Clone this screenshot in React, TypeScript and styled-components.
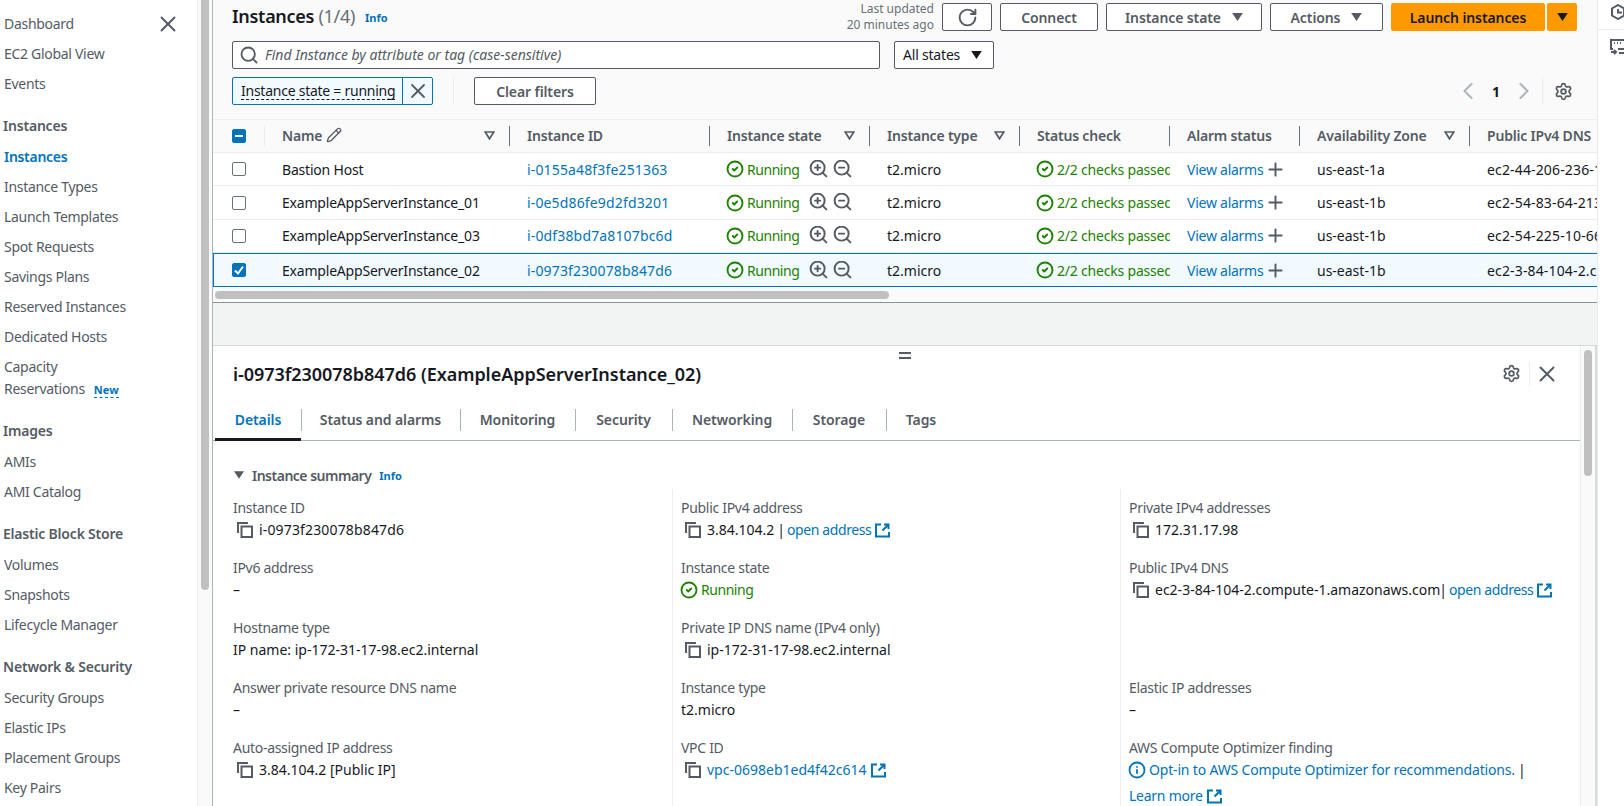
import React from "react";
import styled, { createGlobalStyle } from "styled-components";
import {
  ChevronLeft,
  ChevronRight,
  CircleCheck,
  Info as InfoIcon,
  Pencil,
  Plus,
  RotateCw,
  Search,
  Settings,
  X,
  ZoomIn,
  ZoomOut,
} from "lucide-react";

const GlobalStyle = createGlobalStyle`
  html, body {
    margin: 0;
    padding: 0;
    height: 100%;
    overflow: hidden;
    background: #fff;
  }
  * {
    box-sizing: border-box;
  }
  body {
    font-family: "Noto Sans", "Open Sans", sans-serif;
    font-size: 14px;
    color: #16191f;
  }
`;

const Page = styled.div`
  display: grid;
  grid-template-columns: 197px 16px 1384px 27px;
  width: 1624px;
  height: 806px;
  overflow: hidden;
`;

/* ---------- side nav ---------- */

const Sidebar = styled.nav`
  padding-top: 13px;
  background: #fff;
  overflow: hidden;
`;

const NavHeading = styled.div`
  margin: 19.7px 0 9px 3px;
  font-size: 14px;
  line-height: 22px;
  font-weight: 600;
  letter-spacing: -0.2px;
  color: #545b64;
`;

const NavItem = styled.a<{ $active?: boolean; $tight?: boolean }>`
  display: block;
  margin: 0 0 ${(p) => (p.$tight ? 6 : 8)}px 4px;
  line-height: 22px;
  letter-spacing: -0.3px;
  color: ${(p) => (p.$active ? "#0073bb" : "#545b64")};
  font-weight: ${(p) => (p.$active ? 600 : 400)};
`;

const NavTop = styled.div`
  display: flex;
  justify-content: space-between;
  align-items: center;
  height: 22px;
  padding-right: 16px;
  color: #545b64;
`;

const NewTag = styled.span`
  margin-left: 9px;
  font-size: 11px;
  font-weight: 700;
  letter-spacing: 0;
  color: #0073bb;
  border-bottom: 1px dashed #0073bb;
`;

const SideTrack = styled.div`
  border-left: 1px solid #eaeded;
  border-right: 1px solid #aab7b8;
  background: #fafafa;
  padding: 0 3px;
`;

const SideThumb = styled.div`
  width: 8px;
  height: 590px;
  border-radius: 0 0 4px 4px;
  background: #c0c0c0;
`;

/* ---------- main column ---------- */

const Main = styled.main`
  display: flex;
  flex-direction: column;
  min-width: 0;
  height: 806px;
`;

const TopPanel = styled.section`
  height: 303px;
  background: #fafafa;
  border-bottom: 1px solid #879596;
  overflow: hidden;
`;

const Toolbar = styled.div`
  display: flex;
  align-items: center;
  height: 34px;
  padding: 0 20px 0 19px;
`;

const Title = styled.h1`
  margin: -2px 0 0;
  font-size: 18px;
  line-height: 34px;
  font-weight: 600;
  letter-spacing: -0.3px;
  color: #16191f;
`;

const Count = styled.span`
  font-weight: 400;
  color: #687078;
`;

const InfoLink = styled.a`
  margin-left: 10px;
  font-size: 11px;
  font-weight: 700;
  color: #0073bb;
`;

const Updated = styled.div`
  margin-left: auto;
  margin-right: 8px;
  text-align: right;
  font-size: 12px;
  line-height: 16px;
  color: #687078;
`;

const Button = styled.button<{ $w: number; $gap?: number }>`
  display: flex;
  align-items: center;
  justify-content: center;
  gap: 11px;
  width: ${(p) => p.$w}px;
  height: 28px;
  margin-left: ${(p) => p.$gap ?? 8}px;
  padding: 0;
  border: 1px solid #545b64;
  border-radius: 2px;
  background: #fff;
  font-family: inherit;
  font-size: 14px;
  font-weight: 600;
  letter-spacing: -0.1px;
  color: #545b64;
`;

const PrimaryButton = styled(Button)`
  border: none;
  background: #ff9900;
  color: #16191f;
`;

const Caret = styled.svg`
  width: 11px;
  height: 8px;
  fill: currentColor;
`;

const FilterRow = styled.div`
  display: flex;
  align-items: center;
  gap: 14px;
  height: 28px;
  margin-top: 7px;
  padding-left: 19px;
`;

const SearchBox = styled.div`
  display: flex;
  align-items: center;
  gap: 6px;
  width: 648px;
  height: 28px;
  padding: 0 0 1px 6px;
  border: 1px solid #545b64;
  border-radius: 2px;
  background: #fff;
  color: #545b64;
  font-size: 14px;
  font-style: italic;
`;

const StateSelect = styled.div`
  display: flex;
  align-items: center;
  gap: 11px;
  width: 100px;
  height: 28px;
  padding: 0 0 1px 8px;
  border: 1px solid #545b64;
  border-radius: 2px;
  background: #fff;
  color: #16191f;
  letter-spacing: -0.2px;
`;

const ChipRow = styled.div`
  display: flex;
  align-items: center;
  height: 28px;
  margin: 8px 0 14px;
  padding: 0 24px 0 19px;
`;

const Chip = styled.div`
  display: flex;
  align-items: center;
  width: 201px;
  height: 28px;
  border: 1px solid #0073bb;
  border-radius: 2px;
  background: #f1faff;
`;

const ChipLabel = styled.span`
  display: flex;
  align-items: center;
  width: 170px;
  height: 26px;
  padding-left: 8px;
  border-right: 1px solid #0073bb;
`;

const ChipText = styled.span`
  line-height: 17px;
  letter-spacing: -0.25px;
  border-bottom: 1px dashed #16191f;
`;

const ChipClose = styled.span`
  display: flex;
  justify-content: center;
  flex: 1;
  color: #545b64;
`;

const VRule = styled.span<{ $h?: number; $color?: string }>`
  display: block;
  width: 1px;
  height: ${(p) => p.$h ?? 28}px;
  background: ${(p) => p.$color ?? "#eaeded"};
`;

const ChipDivider = styled(VRule)`
  margin: 0 20px;
`;

const Pager = styled.div`
  display: flex;
  align-items: center;
  margin-left: auto;
  color: #aab7b8;
`;

const PageNumber = styled.span`
  width: 28px;
  text-align: center;
  font-weight: 700;
  color: #16191f;
`;

const PagerDivider = styled(VRule)`
  margin: 0 11px 0 4px;
`;

const Gear = styled(Settings)`
  color: #545b64;
`;

const Table = styled.div`
  border-top: 1px solid #eaeded;
`;

const COLUMNS = "52px 245px 200px 160px 150px 150px 130px 170px 127px";

const HeadRow = styled.div`
  display: grid;
  grid-template-columns: ${COLUMNS};
  height: 33px;
  align-items: center;
  background: #fafafa;
  border-bottom: 1px solid #eaeded;
`;

const Row = styled.div<{ $selected?: boolean }>`
  display: grid;
  grid-template-columns: ${COLUMNS};
  height: ${(p) => (p.$selected ? 34 : 33.4)}px;
  align-items: center;
  background: ${(p) => (p.$selected ? "#f1faff" : "#fff")};
  border-bottom: 1px solid ${(p) => (p.$selected ? "#0073bb" : "#eaeded")};
  border-top: ${(p) => (p.$selected ? "1px solid #0073bb" : "none")};
  box-shadow: ${(p) => (p.$selected ? "inset 1px 0 0 #0073bb" : "none")};
`;

const HeadCheckCell = styled.div`
  display: flex;
  align-items: center;
  padding-left: 19px;
  height: 20px;
  border-right: 1px solid #eaeded;
`;

const CheckCell = styled.div`
  display: flex;
  padding-left: 19px;
`;

const Box = styled.span<{ $on?: boolean }>`
  display: flex;
  align-items: center;
  justify-content: center;
  width: 14px;
  height: 14px;
  border-radius: 2px;
  border: 1px solid ${(p) => (p.$on ? "#0073bb" : "#687078")};
  background: ${(p) => (p.$on ? "#0073bb" : "#fff")};
`;

const HeadCell = styled.div<{ $divider?: boolean }>`
  display: flex;
  align-items: center;
  justify-content: space-between;
  height: 20px;
  padding: 0 14px 2px 17px;
  border-right: ${(p) => (p.$divider ? "1px solid #687078" : "none")};
  font-weight: 600;
  letter-spacing: -0.2px;
  color: #545b64;
  white-space: nowrap;
`;

const NameLabel = styled.span`
  display: inline-flex;
  align-items: center;
  gap: 4px;
`;

const Cell = styled.div<{ $spacing?: number }>`
  display: flex;
  align-items: center;
  padding-left: 17px;
  overflow: hidden;
  white-space: nowrap;
  letter-spacing: ${(p) => p.$spacing ?? 0}px;
`;

const Link = styled.a<{ $spacing?: number }>`
  color: #0073bb;
  letter-spacing: ${(p) => p.$spacing ?? -0.25}px;
`;

const Status = styled.span<{ $spacing?: number }>`
  display: inline-flex;
  align-items: center;
  gap: 3px;
  color: #1d8102;
  letter-spacing: ${(p) => p.$spacing ?? -0.45}px;

  svg {
    margin-left: -1px;
  }
`;

const ZoomIcons = styled.span`
  display: inline-flex;
  gap: 3px;
  margin: -2px 0 0 9px;
  color: #545b64;
`;

const AddIcon = styled(Plus)`
  margin-left: 2px;
  color: #545b64;
`;

const HScroll = styled.div`
  width: 674px;
  height: 8px;
  margin: 4px 0 0 2px;
  border-radius: 4px;
  background: #c0c0c0;
`;

const Splitter = styled.div`
  height: 43px;
  background: #f2f3f3;
  border-bottom: 1px solid #d5dbdb;
`;

/* ---------- details panel ---------- */

const DetailWrap = styled.section`
  display: grid;
  grid-template-columns: 1367px 15px 2px;
  grid-template-rows: minmax(0, 1fr);
  flex: 1;
  min-height: 0;
`;

const Detail = styled.div`
  position: relative;
  background: #fff;
  overflow: hidden;
`;

const Handle = styled.span`
  position: absolute;
  left: 686px;
  top: 6px;
  width: 12px;
  height: 7px;
  border-top: 2px solid #545b64;
  border-bottom: 2px solid #545b64;
`;

const DetailHead = styled.div`
  display: flex;
  align-items: center;
  justify-content: space-between;
  height: 55px;
  padding: 0 20px 0 20px;
`;

const DetailTitle = styled.h2`
  margin: 0;
  font-size: 18px;
  font-weight: 600;
  letter-spacing: -0.05px;
  color: #16191f;
`;

const DetailTools = styled.div`
  display: flex;
  align-items: center;
  color: #545b64;
`;

const ToolDivider = styled(VRule)`
  margin: 0 4px 0 8px;
`;

const Tabs = styled.div`
  display: flex;
  align-items: stretch;
  height: 40px;
  padding-left: 2px;
  border-bottom: 1px solid #aab7b8;
`;

const Tab = styled.div<{ $active?: boolean; $w: number }>`
  position: relative;
  display: flex;
  align-items: center;
  justify-content: center;
  width: ${(p) => p.$w}px;
  margin-bottom: -1px;
  font-weight: 600;
  letter-spacing: -0.1px;
  color: ${(p) => (p.$active ? "#0073bb" : "#545b64")};
  border-bottom: 3px solid ${(p) => (p.$active ? "#16191f" : "transparent")};

  &:not(:last-child)::after {
    content: "";
    position: absolute;
    right: -1px;
    top: 8px;
    height: 22px;
    width: 1px;
    background: #aab7b8;
  }
`;

const SummaryTitle = styled.div`
  display: flex;
  align-items: center;
  height: 22px;
  margin: 23px 0 0 21px;
  font-weight: 600;
  letter-spacing: -0.5px;
  color: #545b64;
`;

const SummaryCaret = styled(Caret)`
  width: 10px;
  height: 8px;
  margin-right: 8px;
`;

const SummaryInfo = styled(InfoLink)`
  margin-left: 8px;
  letter-spacing: 0;
`;

const Fields = styled.div`
  display: grid;
  grid-template-columns: repeat(3, 448px);
  margin: 3px 0 0 11px;
`;

const FieldColumn = styled.div`
  padding: 0 0 40px 8px;
  border-left: 1px solid #eaeded;

  &:first-child {
    padding-left: 9px;
    border-left: none;
  }
`;

const Field = styled.div`
  height: 60px;
  padding-top: 8px;
`;

const FieldGap = styled.div`
  height: 60px;
`;

const Label = styled.div`
  line-height: 22px;
  letter-spacing: -0.3px;
  color: #545b64;
`;

const Value = styled.div<{ $top?: number; $spacing?: number }>`
  display: flex;
  align-items: center;
  margin-top: ${(p) => p.$top ?? 0}px;
  line-height: 22px;
  letter-spacing: ${(p) => p.$spacing ?? 0}px;
  color: #16191f;
  white-space: nowrap;
`;

const CopyIcon = styled.svg`
  flex: none;
  width: 16px;
  height: 16px;
  margin: 0 6px 0 4px;
  color: #545b64;
`;

const ExternalIcon = styled.svg`
  flex: none;
  width: 15px;
  height: 15px;
  margin-left: 4px;
  color: #0073bb;
`;

const Sep = styled.span<{ $tight?: boolean }>`
  margin: ${(p) => (p.$tight ? "0 2px 0 -1px" : "0 2px 0 3px")};
`;

const OptimizerIcon = styled(InfoIcon)`
  margin: 0 3px 0 -1px;
  color: #0073bb;
`;

const DetailTrack = styled.div`
  border-left: 1px solid #eaeded;
  background: #fafafa;
  padding: 4px 0 0 3px;
`;

const DetailThumb = styled.div`
  width: 8px;
  height: 126px;
  border-radius: 4px;
  background: #c0c0c0;
`;

const DetailEdge = styled.div`
  background: #d5dbdb;
`;

/* ---------- right rail ---------- */

const Rail = styled.aside`
  border-left: 1px solid #eaeded;
  background: #fff;
  overflow: hidden;
`;

const RailSlot = styled.div<{ $line?: boolean }>`
  display: flex;
  align-items: flex-start;
  height: 30px;
  padding: ${(p) => (p.$line ? "4px" : "9px")} 0 0 12px;
  border-bottom: ${(p) => (p.$line ? "1px solid #eaeded" : "none")};
  color: #545b64;
`;

const RailIcon = styled.svg`
  flex: none;
  width: 16px;
  height: 16px;
`;

const CaretDown = () => (
  <Caret viewBox="0 0 12 9">
    <path d="M0 0h12L6 9z" />
  </Caret>
);

const SortCaret = () => (
  <svg width="11" height="9" viewBox="0 0 11 9" fill="none" stroke="#545b64" strokeWidth="1.7">
    <path d="M1.2 1h8.6L5.5 7.8z" />
  </svg>
);

const Copy = () => (
  <CopyIcon viewBox="0 0 16 16" fill="none" stroke="currentColor" strokeWidth="2">
    <path d="M1 11V1h10" />
    <rect x="4.5" y="4.5" width="10.5" height="10.5" />
  </CopyIcon>
);

const External = () => (
  <ExternalIcon viewBox="0 0 15 15" fill="none" stroke="currentColor" strokeWidth="2">
    <path d="M6 1.5H1v12h13V9" />
    <path d="M9 1.5h4.5V6M13.5 1.5 7.5 7.5" />
  </ExternalIcon>
);

const Running = () => (
  <Status>
    <CircleCheck size={18} strokeWidth={2.5} />
    Running
  </Status>
);

const rows = [
  { name: "Bastion Host", id: "i-0155a48f3fe251363", zone: "us-east-1a", dns: "ec2-44-206-236-146.compute-1" },
  { name: "ExampleAppServerInstance_01", id: "i-0e5d86fe9d2fd3201", zone: "us-east-1b", dns: "ec2-54-83-64-213.compute-1" },
  { name: "ExampleAppServerInstance_03", id: "i-0df38bd7a8107bc6d", zone: "us-east-1b", dns: "ec2-54-225-10-66.compute-1" },
  { name: "ExampleAppServerInstance_02", id: "i-0973f230078b847d6", zone: "us-east-1b", dns: "ec2-3-84-104-2.compute-1", selected: true },
];

const tabs = [
  { label: "Details", w: 86 },
  { label: "Status and alarms", w: 159 },
  { label: "Monitoring", w: 115 },
  { label: "Security", w: 97 },
  { label: "Networking", w: 120 },
  { label: "Storage", w: 94 },
  { label: "Tags", w: 70 },
];

const instanceItems = [
  "Instances",
  "Instance Types",
  "Launch Templates",
  "Spot Requests",
  "Savings Plans",
  "Reserved Instances",
  "Dedicated Hosts",
];

export default function App() {
  return (
    <Page>
      <GlobalStyle />
      <Sidebar>
        <NavItem as="div">
          <NavTop>
            Dashboard
            <X size={26} strokeWidth={1.8} />
          </NavTop>
        </NavItem>
        <NavItem>EC2 Global View</NavItem>
        <NavItem>Events</NavItem>
        <NavHeading>Instances</NavHeading>
        {instanceItems.map((item, i) => (
          <NavItem key={item} $active={i === 0}>
            {item}
          </NavItem>
        ))}
        <NavItem $tight>
          Capacity
          <br />
          Reservations
          <NewTag>New</NewTag>
        </NavItem>
        <NavHeading>Images</NavHeading>
        <NavItem>AMIs</NavItem>
        <NavItem>AMI Catalog</NavItem>
        <NavHeading>Elastic Block Store</NavHeading>
        <NavItem>Volumes</NavItem>
        <NavItem>Snapshots</NavItem>
        <NavItem>Lifecycle Manager</NavItem>
        <NavHeading>Network &amp; Security</NavHeading>
        <NavItem>Security Groups</NavItem>
        <NavItem>Elastic IPs</NavItem>
        <NavItem>Placement Groups</NavItem>
        <NavItem>Key Pairs</NavItem>
      </Sidebar>
      <SideTrack>
        <SideThumb />
      </SideTrack>

      <Main>
        <TopPanel>
          <Toolbar>
            <Title>
              Instances <Count>(1/4)</Count>
            </Title>
            <InfoLink>Info</InfoLink>
            <Updated>
              Last updated
              <br />
              20 minutes ago
            </Updated>
            <Button $w={50} $gap={0}>
              <RotateCw size={21} strokeWidth={2.2} />
            </Button>
            <Button $w={98}>Connect</Button>
            <Button $w={156}>
              Instance state <CaretDown />
            </Button>
            <Button $w={113}>
              Actions <CaretDown />
            </Button>
            <PrimaryButton $w={154}>Launch instances</PrimaryButton>
            <PrimaryButton $w={30} $gap={2}>
              <CaretDown />
            </PrimaryButton>
          </Toolbar>
          <FilterRow>
            <SearchBox>
              <Search size={20} strokeWidth={2.2} />
              Find Instance by attribute or tag (case-sensitive)
            </SearchBox>
            <StateSelect>
              All states <CaretDown />
            </StateSelect>
          </FilterRow>
          <ChipRow>
            <Chip>
              <ChipLabel>
                <ChipText>Instance state = running</ChipText>
              </ChipLabel>
              <ChipClose>
                <X size={24} strokeWidth={1.8} />
              </ChipClose>
            </Chip>
            <ChipDivider />
            <Button $w={122} $gap={0}>
              Clear filters
            </Button>
            <Pager>
              <ChevronLeft size={28} strokeWidth={1.8} />
              <PageNumber>1</PageNumber>
              <ChevronRight size={28} strokeWidth={1.8} />
              <PagerDivider />
              <Gear size={19} strokeWidth={2.2} />
            </Pager>
          </ChipRow>
          <Table>
            <HeadRow>
              <HeadCheckCell>
                <Box $on>
                  <svg width="10" height="10" viewBox="0 0 10 10" stroke="#fff" strokeWidth="2">
                    <path d="M1 5h8" />
                  </svg>
                </Box>
              </HeadCheckCell>
              <HeadCell $divider>
                <NameLabel>
                  Name <Pencil size={16} strokeWidth={2} />
                </NameLabel>
                <SortCaret />
              </HeadCell>
              <HeadCell $divider>Instance ID</HeadCell>
              <HeadCell $divider>
                Instance state <SortCaret />
              </HeadCell>
              <HeadCell $divider>
                Instance type <SortCaret />
              </HeadCell>
              <HeadCell $divider>Status check</HeadCell>
              <HeadCell $divider>Alarm status</HeadCell>
              <HeadCell $divider>
                Availability Zone <SortCaret />
              </HeadCell>
              <HeadCell>Public IPv4 DNS</HeadCell>
            </HeadRow>
            {rows.map((r) => (
              <Row key={r.id} $selected={r.selected}>
                <CheckCell>
                  <Box $on={r.selected}>
                    {r.selected && (
                      <svg width="12" height="12" viewBox="0 0 12 12" fill="none" stroke="#fff" strokeWidth="2">
                        <path d="M2 6.5 5 9.5 10 2.5" />
                      </svg>
                    )}
                  </Box>
                </CheckCell>
                <Cell $spacing={-0.2}>{r.name}</Cell>
                <Cell>
                  <Link $spacing={0.15}>{r.id}</Link>
                </Cell>
                <Cell>
                  <Running />
                  <ZoomIcons>
                    <ZoomIn size={21} strokeWidth={2.2} />
                    <ZoomOut size={21} strokeWidth={2.2} />
                  </ZoomIcons>
                </Cell>
                <Cell>t2.micro</Cell>
                <Cell>
                  <Status $spacing={-0.2}>
                    <CircleCheck size={18} strokeWidth={2.5} />
                    2/2 checks passed
                  </Status>
                </Cell>
                <Cell>
                  <Link>View alarms</Link>
                  <AddIcon size={21} strokeWidth={2.2} />
                </Cell>
                <Cell>{r.zone}</Cell>
                <Cell $spacing={0.15}>{r.dns}</Cell>
              </Row>
            ))}
          </Table>
          <HScroll />
        </TopPanel>

        <Splitter />

        <DetailWrap>
          <Detail>
            <Handle />
            <DetailHead>
              <DetailTitle>i-0973f230078b847d6 (ExampleAppServerInstance_02)</DetailTitle>
              <DetailTools>
                <Settings size={19} strokeWidth={2.2} />
                <ToolDivider $h={24} />
                <X size={26} strokeWidth={1.8} />
              </DetailTools>
            </DetailHead>
            <Tabs>
              {tabs.map((t, i) => (
                <Tab key={t.label} $w={t.w} $active={i === 0}>
                  {t.label}
                </Tab>
              ))}
            </Tabs>
            <SummaryTitle>
              <SummaryCaret viewBox="0 0 12 9">
                <path d="M0 0h12L6 9z" />
              </SummaryCaret>
              Instance summary
              <SummaryInfo>Info</SummaryInfo>
            </SummaryTitle>
            <Fields>
              <FieldColumn>
                <Field>
                  <Label>Instance ID</Label>
                  <Value $spacing={0.15}>
                    <Copy />
                    i-0973f230078b847d6
                  </Value>
                </Field>
                <Field>
                  <Label>IPv6 address</Label>
                  <Value>–</Value>
                </Field>
                <Field>
                  <Label>Hostname type</Label>
                  <Value>IP name: ip-172-31-17-98.ec2.internal</Value>
                </Field>
                <Field>
                  <Label>Answer private resource DNS name</Label>
                  <Value>–</Value>
                </Field>
                <Field>
                  <Label>Auto-assigned IP address</Label>
                  <Value>
                    <Copy />
                    3.84.104.2 [Public IP]
                  </Value>
                </Field>
              </FieldColumn>
              <FieldColumn>
                <Field>
                  <Label>Public IPv4 address</Label>
                  <Value>
                    <Copy />
                    3.84.104.2
                    <Sep>|</Sep>
                    <Link $spacing={-0.4}>open address</Link>
                    <External />
                  </Value>
                </Field>
                <Field>
                  <Label>Instance state</Label>
                  <Value>
                    <Running />
                  </Value>
                </Field>
                <Field>
                  <Label>Private IP DNS name (IPv4 only)</Label>
                  <Value>
                    <Copy />
                    ip-172-31-17-98.ec2.internal
                  </Value>
                </Field>
                <Field>
                  <Label>Instance type</Label>
                  <Value>t2.micro</Value>
                </Field>
                <Field>
                  <Label>VPC ID</Label>
                  <Value>
                    <Copy />
                    <Link $spacing={0}>vpc-0698eb1ed4f42c614</Link>
                    <External />
                  </Value>
                </Field>
              </FieldColumn>
              <FieldColumn>
                <Field>
                  <Label>Private IPv4 addresses</Label>
                  <Value>
                    <Copy />
                    172.31.17.98
                  </Value>
                </Field>
                <Field>
                  <Label>Public IPv4 DNS</Label>
                  <Value>
                    <Copy />
                    ec2-3-84-104-2.compute-1.amazonaws.com
                    <Sep $tight>|</Sep>
                    <Link $spacing={-0.4}>open address</Link>
                    <External />
                  </Value>
                </Field>
                <FieldGap />
                <Field>
                  <Label>Elastic IP addresses</Label>
                  <Value>–</Value>
                </Field>
                <Field>
                  <Label>AWS Compute Optimizer finding</Label>
                  <Value>
                    <OptimizerIcon size={18} strokeWidth={2.4} />
                    <Link $spacing={-0.17}>Opt-in to AWS Compute Optimizer for recommendations.</Link>
                    <Sep>|</Sep>
                  </Value>
                  <Value $top={4}>
                    <Link>Learn more</Link>
                    <External />
                  </Value>
                </Field>
              </FieldColumn>
            </Fields>
          </Detail>
          <DetailTrack>
            <DetailThumb />
          </DetailTrack>
          <DetailEdge />
        </DetailWrap>
      </Main>

      <Rail>
        <RailSlot $line>
          <RailIcon viewBox="0 0 16 16" fill="none" stroke="currentColor" strokeWidth="2">
            <path d="M8 1 14 4.5v7L8 15 2 11.5v-7z" />
            <path d="M8 5v3.5H12" />
          </RailIcon>
        </RailSlot>
        <RailSlot>
          <RailIcon viewBox="0 0 16 16" fill="none" stroke="currentColor" strokeWidth="2">
            <path d="M3 10H1V1h14v9H8" />
            <path d="M4 4h1M7 4h1M10 4h1M1 13h5M4 11l2 2-2 2M9 14h5" />
          </RailIcon>
        </RailSlot>
      </Rail>
    </Page>
  );
}
